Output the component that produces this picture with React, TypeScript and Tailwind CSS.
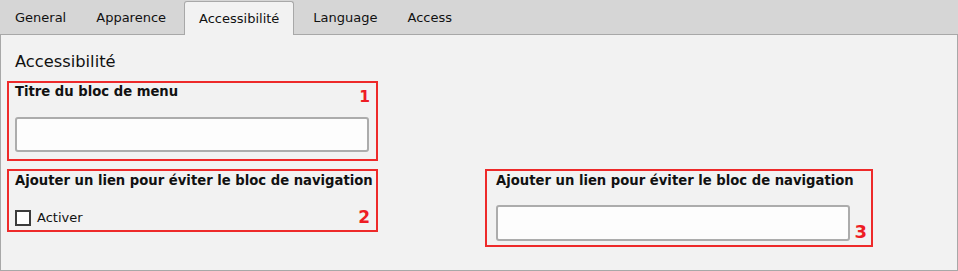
import React from "react";

function Tab({ label, active }: { label: string; active?: boolean }) {
  if (active) {
    return (
      <div className="h-[34px] -mb-px ml-[3px] mr-[4px] px-[14px] pb-px flex items-center bg-[#f2f2f2] border border-b-0 border-[#a8a8a8] rounded-t-[3px]">
        {label}
      </div>
    );
  }
  return <div className="h-[34px] pt-px px-[15px] flex items-center">{label}</div>;
}

export default function App() {
  return (
    <div className="w-[958px] h-[271px] bg-[#f2f2f2] font-['DejaVu_Sans',sans-serif] text-[#111] flex flex-col">
      <div className="h-[35px] shrink-0 bg-[#d6d6d6] border-b border-[#a8a8a8] flex items-end text-[13px] leading-[15px]">
        <Tab label="General" />
        <Tab label="Apparence" />
        <Tab label="Accessibilité" active />
        <Tab label="Language" />
        <Tab label="Access" />
      </div>
      <div className="flex-1 border-x border-b border-[#a8a8a8] pl-[6px] flex flex-col items-start">
        <div className="mt-[17px] ml-[8px] text-[16.3px] leading-[19px]">Accessibilité</div>

        <div className="relative mt-[10px] w-[371px] h-[80px] border-2 border-[#ee2a2a] pl-[6px] pt-[1px]">
          <div className="font-bold text-[13.2px] leading-[15px]">Titre du bloc de menu</div>
          <div className="mt-[18px] w-[354px] h-[35px] border-2 border-[#acacac] rounded-[3px] bg-[#fdfdfd]" />
          <span className="absolute right-[6px] top-[6px] text-[15.5px] leading-[16px] font-bold text-[#ee1c24]">1</span>
        </div>

        <div className="mt-[8px] flex items-start">
          <div className="relative w-[371px] h-[63px] border-2 border-[#ee2a2a] pl-[6px] pt-[2px]">
            <div className="font-bold text-[13.2px] leading-[15px]">Ajouter un lien pour éviter le bloc de navigation</div>
            <div className="mt-[22px] flex items-center gap-[6px] text-[13px] leading-[16px]">
              <div className="w-[16px] h-[16px] border-2 border-[#3c3c3c] bg-white" />
              <span>Activer</span>
            </div>
            <span className="absolute right-[6px] top-[38px] text-[17px] leading-[17px] font-bold text-[#ee1c24]">2</span>
          </div>

          <div className="relative ml-[107px] w-[388px] h-[78px] border-2 border-[#ee2a2a] pl-[9px] pt-[2px]">
            <div className="font-bold text-[13.2px] leading-[15px]">Ajouter un lien pour éviter le bloc de navigation</div>
            <div className="mt-[17px] w-[354px] h-[36px] border-2 border-[#acacac] rounded-[3px] bg-[#fdfdfd]" />
            <span className="absolute right-[4px] top-[52px] text-[18px] leading-[18px] font-bold text-[#ee1c24]">3</span>
          </div>
        </div>
      </div>
    </div>
  );
}
